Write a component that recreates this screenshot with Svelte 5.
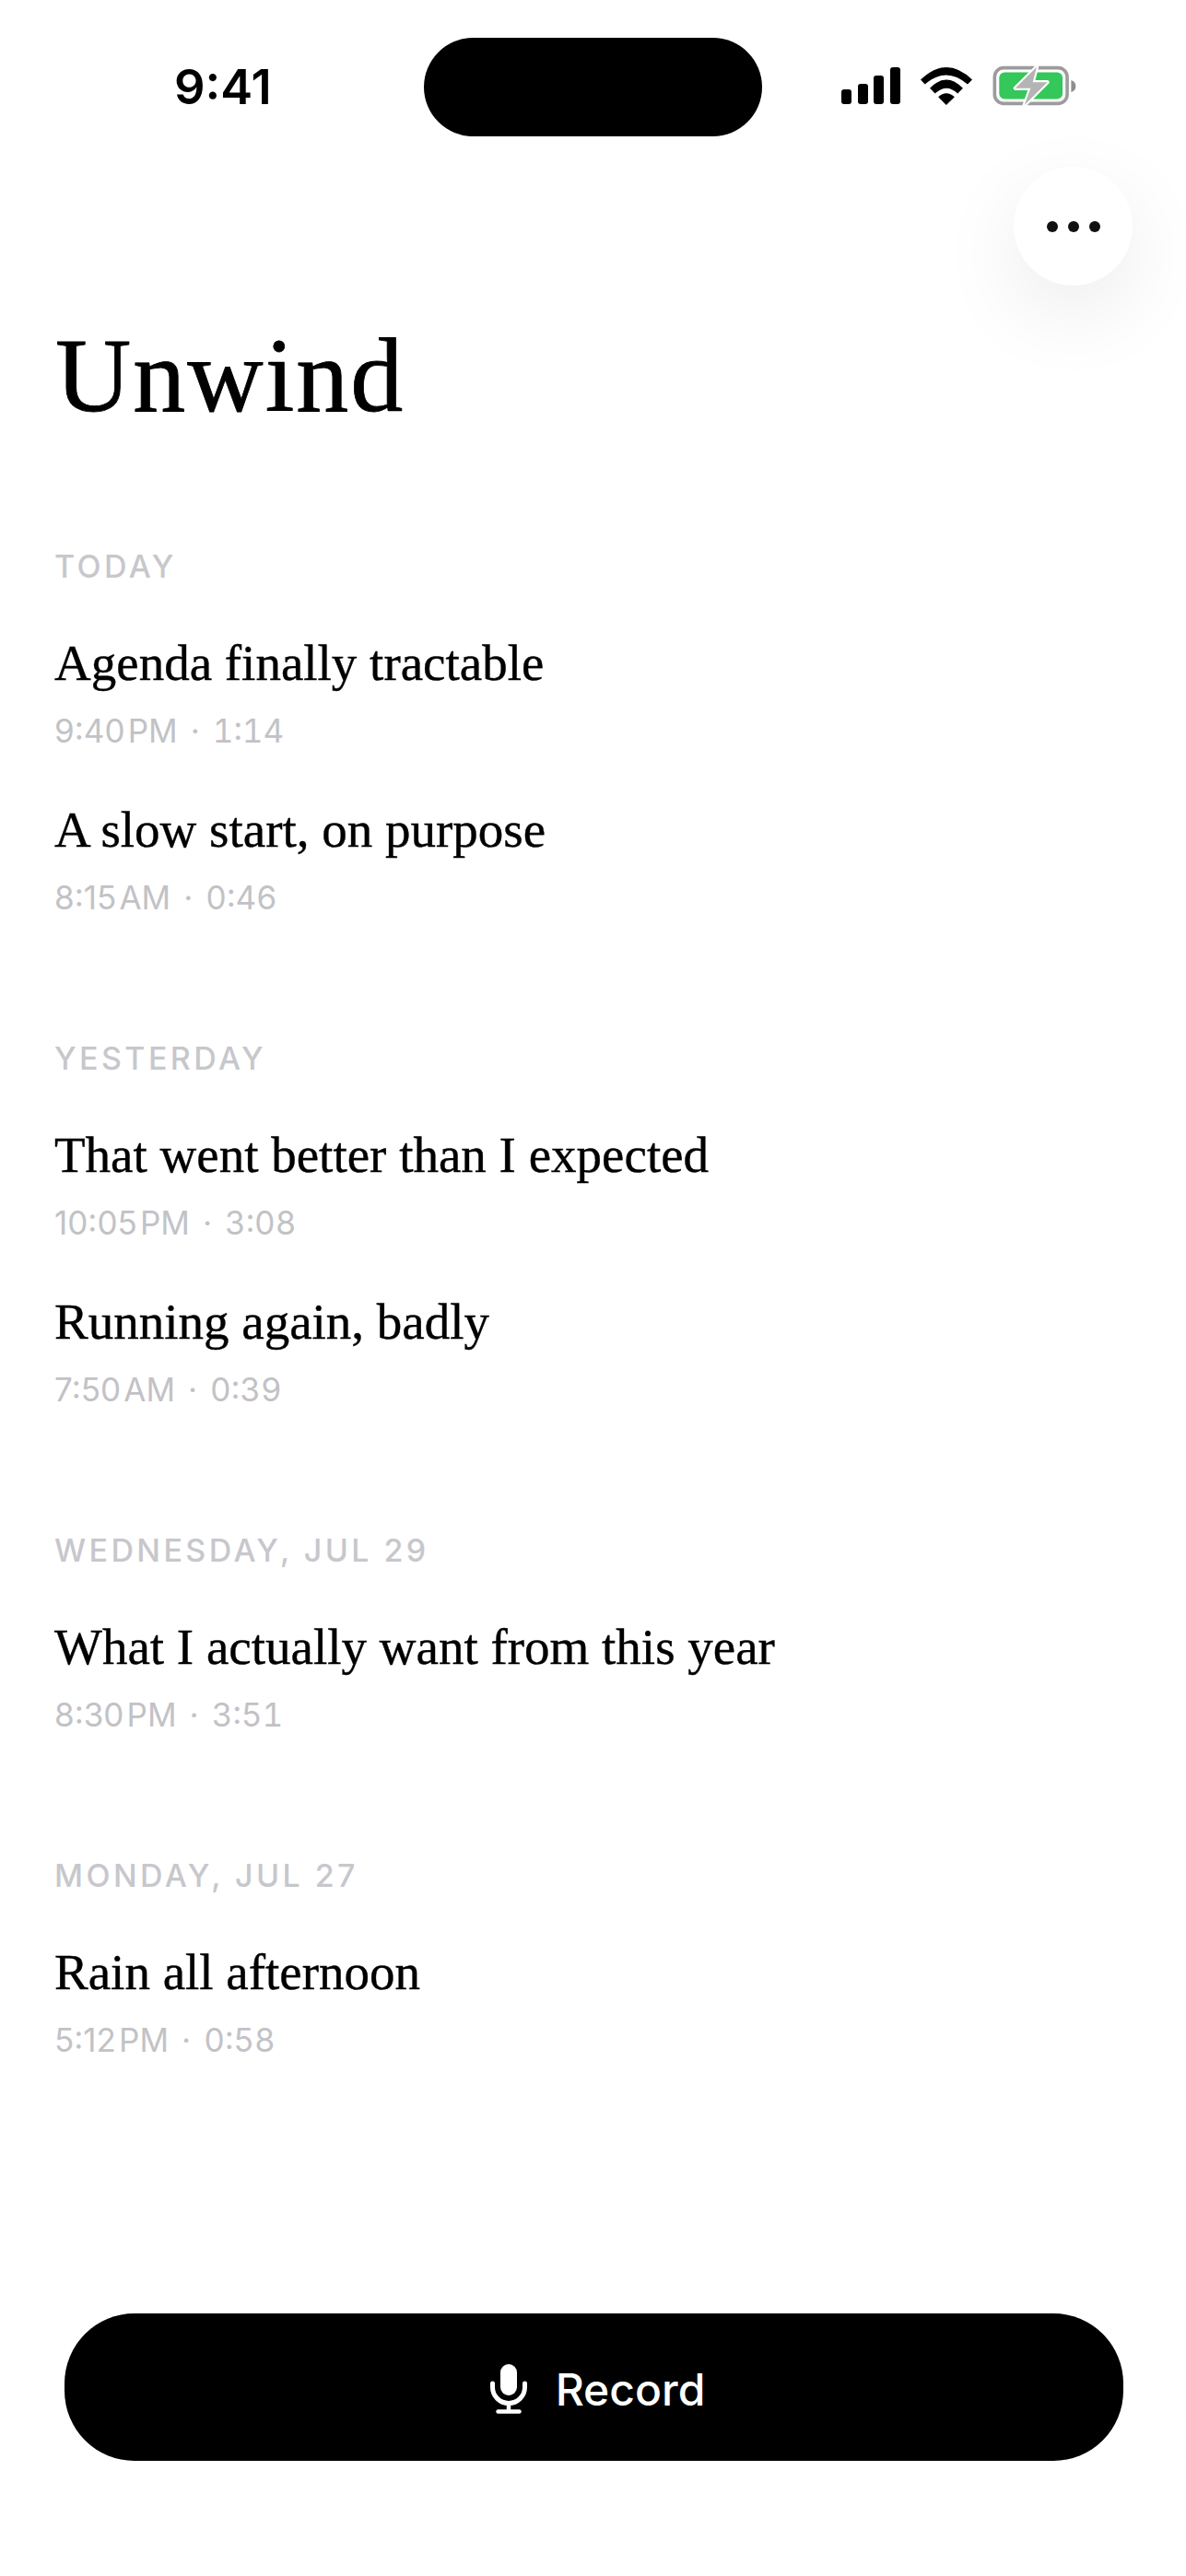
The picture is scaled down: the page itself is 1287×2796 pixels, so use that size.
<script>
const days = [
	{
		label: 'TODAY',
		notes: [
			{ title: 'Agenda finally tractable', time: '9:40\u200aPM', length: '1:14' },
			{ title: 'A slow start, on purpose', time: '8:15\u200aAM', length: '0:46' },
		],
	},
	{
		label: 'YESTERDAY',
		notes: [
			{ title: 'That went better than I expected', time: '10:05\u200aPM', length: '3:08' },
			{ title: 'Running again, badly', time: '7:50\u200aAM', length: '0:39' },
		],
	},
	{
		label: 'WEDNESDAY, JUL 29',
		notes: [
			{ title: 'What I actually want from this year', time: '8:30\u200aPM', length: '3:51' },
		],
	},
	{
		label: 'MONDAY, JUL 27',
		notes: [
			{ title: 'Rain all afternoon', time: '5:12\u200aPM', length: '0:58' },
		],
	},
];
</script>

<div class="app">
	<header class="status">
		<span class="clock">9:41</span>
		<div class="island"></div>
		<div class="indicators">
			<svg width="64" height="40" viewBox="0 0 64 40" fill="#000">
				<rect x="0" y="24" width="11" height="16" rx="3" />
				<rect x="18" y="18" width="11" height="22" rx="3" />
				<rect x="35" y="9" width="11" height="31" rx="3" />
				<rect x="53" y="0" width="11" height="40" rx="3" />
			</svg>
			<svg width="56" height="41" viewBox="358 100 167 122" fill="#000">
				<path d="M358 140Q441 60 525 140L510 155Q441 95 372 155Z" />
				<path d="M388 168Q441 112 495 168L478 185Q441 150 405 185Z" />
				<path d="M415 196Q441 172 468 196L441 222Z" />
			</svg>
			<svg width="91" height="44" viewBox="590 95 275 133">
				<rect x="597" y="103" width="238" height="117" rx="30" fill="none" stroke="#9c9c9c" stroke-width="11" />
				<rect x="612" y="118" width="208" height="87" rx="18" fill="#34c759" />
				<path d="M848 143Q863 148 863 163Q863 178 848 183Z" fill="#8e8e8e" />
				<path d="M735 100L665 170H715L695 225L770 150H722Z" fill="#b4b4b4" stroke="#fff" stroke-width="13" stroke-linejoin="round" paint-order="stroke" />
			</svg>
		</div>
	</header>

	<div class="actions">
		<button class="more" aria-label="More">
			<span></span><span></span><span></span>
		</button>
	</div>

	<h1>Unwind</h1>

	<main>
		{#each days as day}
			<section>
				<h2>{day.label}</h2>
				{#each day.notes as note}
					<article>
						<h3>{note.title}</h3>
						<p>{note.time}<i>·</i><span>{note.length}</span></p>
					</article>
				{/each}
			</section>
		{/each}
	</main>

	<footer>
		<button class="record">
			<svg width="40" height="54" viewBox="0 0 40 54" fill="none" stroke="#fff">
				<rect x="11" y="0" width="18" height="34" rx="9" fill="#fff" stroke="none" />
				<path d="M2.500 21V25A17.500 17.500 0 0 0 37.500 25V21" stroke-width="5" stroke-linecap="round" />
				<path d="M20 43V51" stroke-width="4.500" />
				<path d="M8.500 51.500H31.500" stroke-width="4.500" stroke-linecap="round" />
			</svg>
			Record
		</button>
	</footer>
</div>

<style>
:global(body) {
	background: #fff;
}

.app {
	display: flex;
	flex-direction: column;
	min-height: 2796px;
	font-family: Inter, "Liberation Sans", sans-serif;
	color: #000;
}

.status {
	display: grid;
	grid-template-columns: 460px 367px 1fr;
	align-items: center;
	padding-top: 41px;
}

.clock {
	padding-left: 189px;
	font-size: 52.500px;
	font-weight: 600;
	line-height: 1;
}

.island {
	height: 107px;
	border-radius: 54px;
	background: #000;
}

.indicators {
	display: flex;
	align-items: center;
	gap: 22px;
	padding-left: 86px;
	margin-top: -3px;
}

.actions {
	display: flex;
	justify-content: flex-end;
	padding: 33px 58px 0 0;
}

.more {
	display: flex;
	align-items: center;
	justify-content: center;
	gap: 11px;
	width: 129px;
	height: 129px;
	padding: 0;
	border: 0;
	border-radius: 50%;
	background: #fff;
	box-shadow: 0 30px 90px rgba(0, 0, 0, 0.08);

	span {
		width: 12px;
		height: 12px;
		border-radius: 50%;
		background: #111;
	}
}

h1 {
	margin: 38px 0 0;
	padding-left: 60px;
	font-family: "Liberation Serif", serif;
	font-size: 114px;
	font-weight: 400;
	line-height: 120px;
	letter-spacing: 2px;
	-webkit-text-stroke: 0.8px #000;
}

main {
	padding: 125px 59px 0;
}

section + section {
	margin-top: 131px;
}

h2 {
	margin: 0;
	font-size: 34px;
	font-weight: 500;
	line-height: 44px;
	letter-spacing: 3.400px;
	color: #c7c7cc;
}

article {
	margin-top: 51px;
}

article + article {
	margin-top: 54px;
}

h3 {
	margin: 0;
	font-family: "Liberation Serif", serif;
	font-size: 55px;
	font-weight: 400;
	line-height: 64px;
	-webkit-text-stroke: 0.4px #000;
}

p {
	margin: 19px 0 0;
	font-size: 35px;
	line-height: 44px;
	color: #c2c2c6;

	i {
		margin: 0 14px;
		font-style: normal;
	}

	span {
		font-variant-numeric: tabular-nums;
	}
}

footer {
	margin-top: auto;
	padding: 0 68px 125px 70px;
}

.record {
	display: flex;
	align-items: center;
	justify-content: center;
	gap: 31px;
	width: 100%;
	height: 160px;
	padding: 4px 0 0 8px;
	border: 0;
	border-radius: 76px;
	background: #000;
	color: #fff;
	font-family: inherit;
	font-size: 48px;
	font-weight: 500;
}
</style>
